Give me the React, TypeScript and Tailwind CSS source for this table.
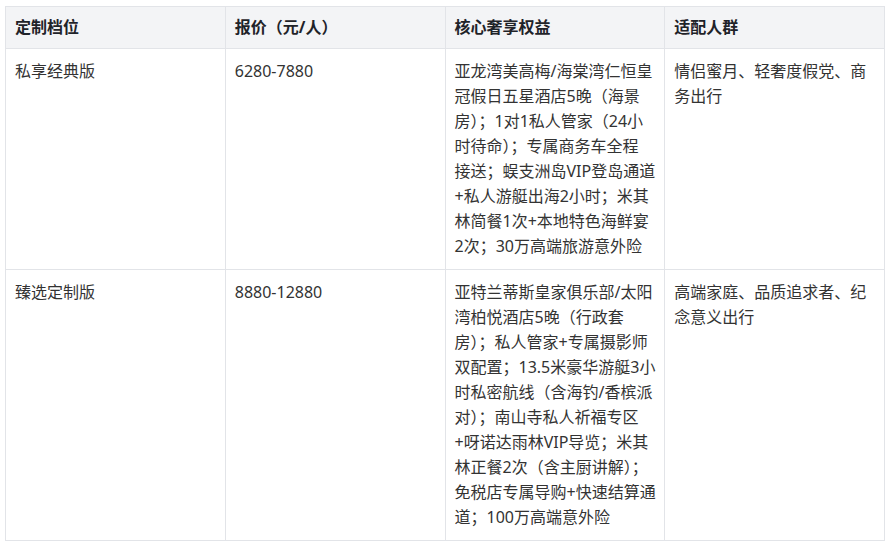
import * as React from "react";

type Row = {
  tier: string;
  price: string;
  perks: string[];
  audience: string[];
};

const rows: Row[] = [
  {
    tier: "私享经典版",
    price: "6280-7880",
    perks: [
      "亚龙湾美高梅/海棠湾仁恒皇",
      "冠假日五星酒店5晚（海景",
      "房）；1对1私人管家（24小",
      "时待命）；专属商务车全程",
      "接送；蜈支洲岛VIP登岛通道",
      "+私人游艇出海2小时；米其",
      "林简餐1次+本地特色海鲜宴",
      "2次；30万高端旅游意外险",
    ],
    audience: ["情侣蜜月、轻奢度假党、商", "务出行"],
  },
  {
    tier: "臻选定制版",
    price: "8880-12880",
    perks: [
      "亚特兰蒂斯皇家俱乐部/太阳",
      "湾柏悦酒店5晚（行政套",
      "房）；私人管家+专属摄影师",
      "双配置；13.5米豪华游艇3小",
      "时私密航线（含海钓/香槟派",
      "对）；南山寺私人祈福专区",
      "+呀诺达雨林VIP导览；米其",
      "林正餐2次（含主厨讲解）；",
      "免税店专属导购+快速结算通",
      "道；100万高端意外险",
    ],
    audience: ["高端家庭、品质追求者、纪", "念意义出行"],
  },
];

const headers = ["定制档位", "报价（元/人）", "核心奢享权益", "适配人群"];

function Lines({ lines }: { lines: string[] }) {
  return (
    <>
      {lines.map((l, i) => (
        <span key={i} className="block whitespace-nowrap">
          {l}
        </span>
      ))}
    </>
  );
}

export default function App() {
  return (
    <div
      className="bg-white pl-[5px] pt-[6px] text-[16px] leading-[25px] text-[#333333]"
      style={{ fontFamily: '"Noto Sans", "Noto Sans CJK SC", sans-serif' }}
    >
      <table className="w-[880px] table-fixed border-collapse">
        <thead>
          <tr className="bg-[#f3f4f6]">
            {headers.map((h) => (
              <th
                key={h}
                className="border border-[#e2e4e8] px-[9px] py-[8px] text-left font-bold text-[#1f2329]"
              >
                {h}
              </th>
            ))}
          </tr>
        </thead>
        <tbody>
          {rows.map((r) => (
            <tr key={r.tier}>
              <td className="border border-[#e2e4e8] px-[9px] py-[10px] align-top">{r.tier}</td>
              <td className="border border-[#e2e4e8] px-[9px] py-[10px] align-top">{r.price}</td>
              <td className="border border-[#e2e4e8] px-[9px] py-[10px] align-top">
                <Lines lines={r.perks} />
              </td>
              <td className="border border-[#e2e4e8] px-[9px] py-[10px] align-top">
                <Lines lines={r.audience} />
              </td>
            </tr>
          ))}
        </tbody>
      </table>
    </div>
  );
}
